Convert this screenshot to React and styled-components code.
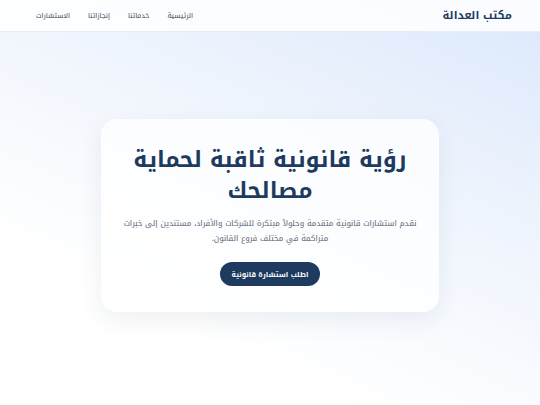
import React from "react";
import styled, { createGlobalStyle } from "styled-components";

const Global = createGlobalStyle`
  html, body { margin: 0; padding: 0; }
  body {
    font-family: "Noto Kufi Arabic", "Noto Sans Arabic", sans-serif;
    direction: rtl;
    background: #fff;
  }
  * { box-sizing: border-box; }
`;

const Page = styled.div`
  width: 540px;
  height: 405px;
  overflow: hidden;
  display: flex;
  flex-direction: column;
  background: linear-gradient(205deg, #dbe8fb 0%, #eef4fd 35%, #ffffff 75%);
`;

const Header = styled.header`
  height: 32px;
  flex-shrink: 0;
  display: flex;
  align-items: center;
  justify-content: space-between;
  padding: 0 28px 0 36px;
  background: rgba(255, 255, 255, 0.85);
  border-bottom: 1px solid #e8ecf2;
`;

const Logo = styled.div`
  font-size: 11px;
  font-weight: 700;
  color: #1e3a5f;
`;

const Nav = styled.nav`
  display: flex;
  gap: 18px;
`;

const NavLink = styled.a`
  font-size: 7px;
  color: #3f4a5c;
  text-decoration: none;
`;

const Main = styled.main`
  flex: 1;
  display: flex;
  align-items: flex-start;
  justify-content: center;
  padding-top: 87px;
`;

const Card = styled.section`
  width: 338px;
  height: 193px;
  border-radius: 16px;
  background: rgba(255, 255, 255, 0.75);
  box-shadow: 0 8px 24px rgba(30, 58, 95, 0.08);
  display: flex;
  flex-direction: column;
  align-items: center;
  padding: 25px 10px 0;
  text-align: center;
`;

const Title = styled.h1`
  margin: 0;
  font-size: 22.5px;
  line-height: 31px;
  font-weight: 700;
  color: #1e3a5f;
`;

const Lead = styled.p`
  margin: 10px 0 0;
  font-size: 8px;
  line-height: 15px;
  color: #5a6475;
`;

const Button = styled.button`
  margin-top: 16px;
  width: 100px;
  height: 24px;
  border: none;
  border-radius: 999px;
  background: #1e3a5f;
  color: #fff;
  font-family: inherit;
  font-size: 7px;
  font-weight: 700;
`;

export default function App() {
  return (
    <>
      <Global />
      <Page>
        <Header>
          <Logo>مكتب العدالة</Logo>
          <Nav>
            <NavLink>الرئيسية</NavLink>
            <NavLink>خدماتنا</NavLink>
            <NavLink>إنجازاتنا</NavLink>
            <NavLink>الاستشارات</NavLink>
          </Nav>
        </Header>
        <Main>
          <Card>
            <Title>رؤية قانونية ثاقبة لحماية<br />مصالحك</Title>
            <Lead>
              نقدم استشارات قانونية متقدمة وحلولاً مبتكرة للشركات والأفراد، مستندين إلى خبرات
              <br />
              متراكمة في مختلف فروع القانون.
            </Lead>
            <Button>اطلب استشارة قانونية</Button>
          </Card>
        </Main>
      </Page>
    </>
  );
}
